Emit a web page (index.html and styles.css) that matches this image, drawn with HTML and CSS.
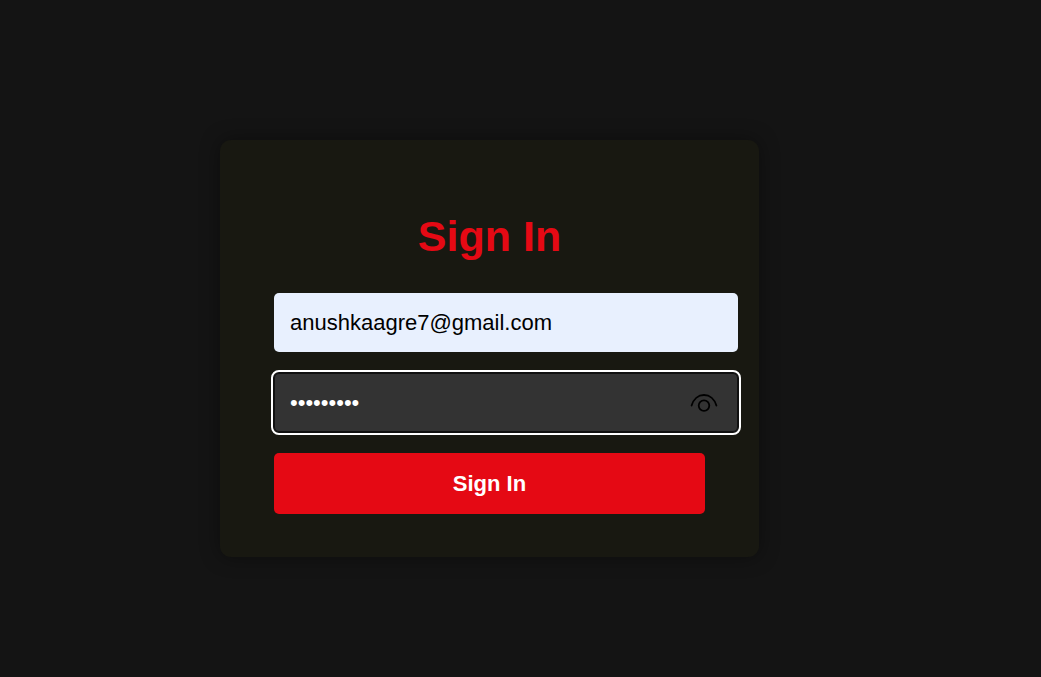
FILE: index.html
```html
<!DOCTYPE html>
<html lang="en">
<head>
<meta charset="utf-8">
<title>Sign In</title>
<link rel="stylesheet" href="styles.css">
</head>
<body>
<main class="page">
  <form class="card">
    <h1 class="title">Sign In</h1>
    <input class="field field-email" type="email" value="anushkaagre7@gmail.com" aria-label="Email">
    <div class="password">
      <input class="field field-password" type="password" value="password1" aria-label="Password">
      <button class="reveal" type="button" aria-label="Show password">
        <svg width="28" height="20" viewBox="0 0 28 20" fill="none" stroke="#000" stroke-width="1.8" stroke-linecap="round"><path d="M1.6 12.6C3.4 6 8.2 2 14 2s10.6 4 12.4 10.6"/><circle cx="14" cy="12.6" r="5.3"/></svg>
      </button>
    </div>
    <button class="submit" type="submit">Sign In</button>
  </form>
</main>
</body>
</html>
```
FILE: styles.css
```css
* {
  box-sizing: border-box;
}

body {
  margin: 0;
  background: #141414;
  font-family: "Liberation Sans", Arial, sans-serif;
}

.page {
  display: flex;
  justify-content: center;
  align-items: center;
  min-height: 100vh;
  padding: 20px 62px 0 0;
}

.card {
  display: flex;
  flex-direction: column;
  width: 100%;
  max-width: 539px;
  padding: 72px 54px 43px;
  border-radius: 11px;
  background: #181811;
  box-shadow: 0 0 20px rgba(0, 0, 0, 0.4);
}

.title {
  margin: 0 0 32px;
  color: #e50914;
  font-size: 43px;
  line-height: 49px;
  text-align: center;
}

.field {
  width: 100%;
  height: 59px;
  padding: 0 16px;
  border: 0;
  border-radius: 5px;
  font: 22px "Liberation Sans", Arial, sans-serif;
}

.field-email,
.password {
  width: auto;
  margin: 0 -33px 21px 0;
}

.field-email {
  background: #e8f0fe;
  color: #000;
}

.password {
  position: relative;
}

.field-password {
  display: block;
  background: #333;
  color: #fff;
  outline: 2px solid #fff;
  outline-offset: 1px;
  box-shadow: 0 0 0 1px #101010, inset 0 0 0 1px #101010;
}

.reveal {
  position: absolute;
  top: 20px;
  right: 20px;
  padding: 0;
  border: 0;
  background: none;
}

.reveal svg {
  display: block;
}

.submit {
  height: 61px;
  border: 0;
  border-radius: 5px;
  background: #e50914;
  color: #fff;
  font: bold 22px "Liberation Sans", Arial, sans-serif;
}
```
